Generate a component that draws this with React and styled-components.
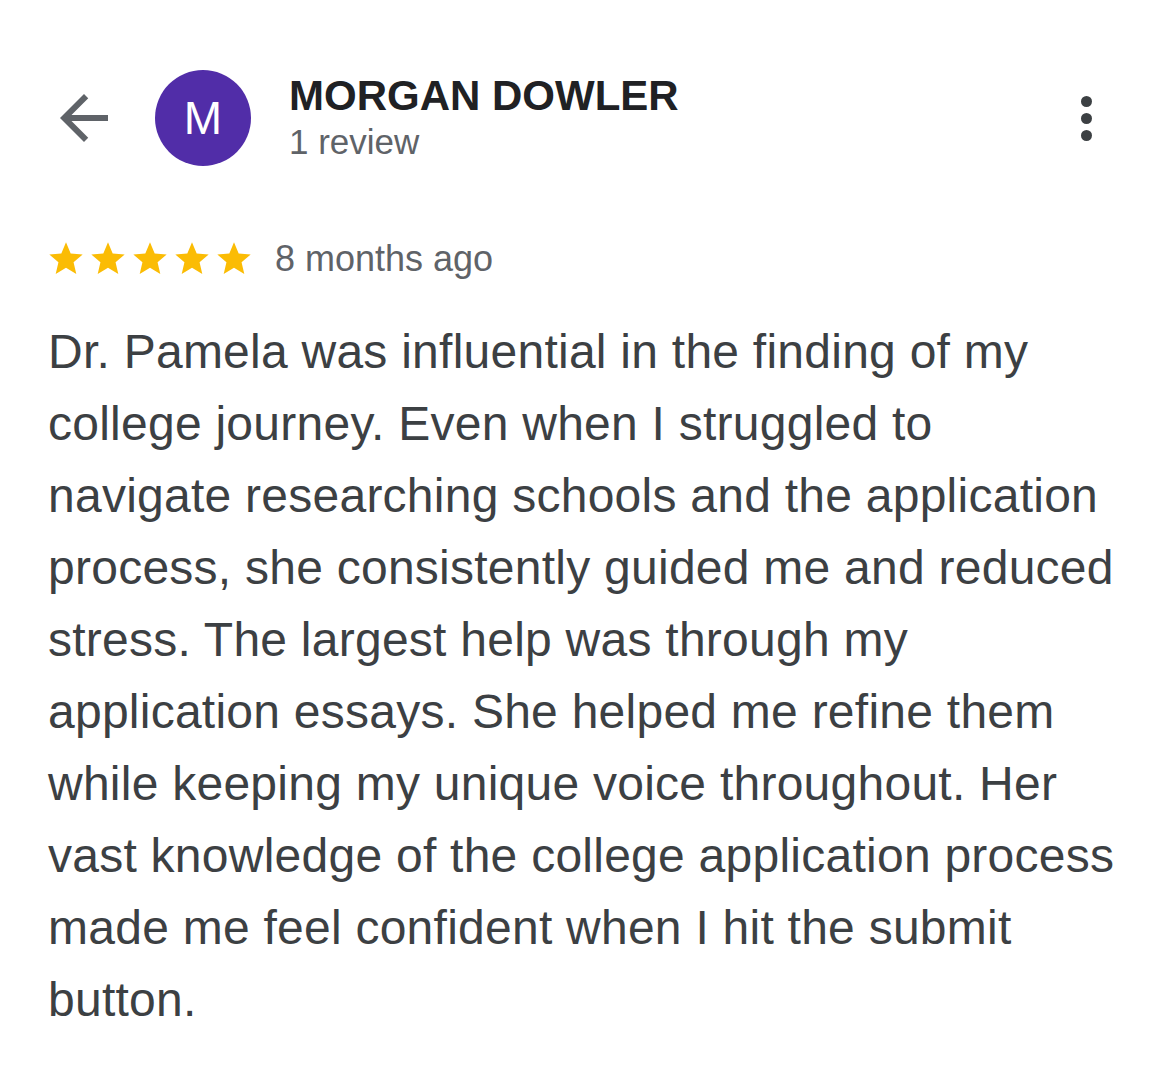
import React from "react";
import styled, { createGlobalStyle } from "styled-components";

const GlobalStyle = createGlobalStyle`
  body {
    margin: 0;
    background: #fff;
    font-family: "Liberation Sans", Arial, sans-serif;
  }
`;

const Page = styled.div`
  width: 1170px;
  min-height: 1083px;
  box-sizing: border-box;
  padding: 68px 30px 0 48px;
`;

const Header = styled.div`
  display: flex;
  align-items: center;
  height: 100px;
`;

const BackButton = styled.button`
  border: none;
  background: transparent;
  padding: 0;
  width: 72px;
  height: 72px;
  display: flex;
  align-items: center;
  justify-content: center;
  margin-right: 35px;
  svg {
    width: 72px;
    height: 72px;
    fill: #5f6368;
  }
`;

const Avatar = styled.div`
  width: 96px;
  height: 96px;
  border-radius: 50%;
  background: #512da8;
  color: #fff;
  display: flex;
  align-items: center;
  justify-content: center;
  font-size: 46px;
  flex-shrink: 0;
`;

const Who = styled.div`
  display: flex;
  flex-direction: column;
  margin-left: 38px;
  flex: 1;
`;

const Name = styled.div`
  font-size: 42px;
  font-weight: 700;
  color: #202124;
  line-height: 48px;
`;

const Count = styled.div`
  font-size: 35px;
  color: #5f6368;
  line-height: 44px;
`;

const MoreButton = styled.button`
  border: none;
  background: transparent;
  padding: 0;
  display: flex;
  flex-direction: column;
  gap: 6px;
  margin-right: 48px;
  span {
    width: 11px;
    height: 11px;
    border-radius: 50%;
    background: #3c4043;
  }
`;

const RatingRow = styled.div`
  display: flex;
  align-items: center;
  margin-top: 70px;
`;

const Stars = styled.div`
  display: flex;
  gap: 2px;
  margin-left: -2px;
  margin-right: 21px;
  svg {
    width: 40px;
    height: 40px;
    fill: #fbbc04;
  }
`;

const Ago = styled.span`
  font-size: 36px;
  color: #5f6368;
`;

const Body = styled.p`
  margin: 36px 0 0;
  font-size: 48px;
  line-height: 72px;
  letter-spacing: 0.25px;
  color: #3c4043;
  white-space: nowrap;
`;

const Line = styled.span`
  display: block;
`;

const lines = [
  "Dr. Pamela was influential in the finding of my",
  "college journey. Even when I struggled to",
  "navigate researching schools and the application",
  "process, she consistently guided me and reduced",
  "stress. The largest help was through my",
  "application essays. She helped me refine them",
  "while keeping my unique voice throughout. Her",
  "vast knowledge of the college application process",
  "made me feel confident when I hit the submit",
  "button.",
];

const Star = () => (
  <svg viewBox="0 0 24 24">
    <path d="M12 17.27L18.18 21l-1.64-7.03L22 9.24l-7.19-.61L12 2 9.19 8.63 2 9.24l5.46 4.73L5.82 21z" />
  </svg>
);

export default function App() {
  return (
    <>
      <GlobalStyle />
      <Page>
        <Header>
          <BackButton aria-label="Back">
            <svg viewBox="0 0 24 24">
              <path d="M20 11H7.83l5.59-5.59L12 4l-8 8 8 8 1.41-1.41L7.83 13H20v-2z" />
            </svg>
          </BackButton>
          <Avatar>M</Avatar>
          <Who>
            <Name>MORGAN DOWLER</Name>
            <Count>1 review</Count>
          </Who>
          <MoreButton aria-label="More">
            <span />
            <span />
            <span />
          </MoreButton>
        </Header>
        <RatingRow>
          <Stars>
            {[0, 1, 2, 3, 4].map((i) => (
              <Star key={i} />
            ))}
          </Stars>
          <Ago>8 months ago</Ago>
        </RatingRow>
        <Body>
          {lines.map((l) => (
            <Line key={l}>{l}</Line>
          ))}
        </Body>
      </Page>
    </>
  );
}
